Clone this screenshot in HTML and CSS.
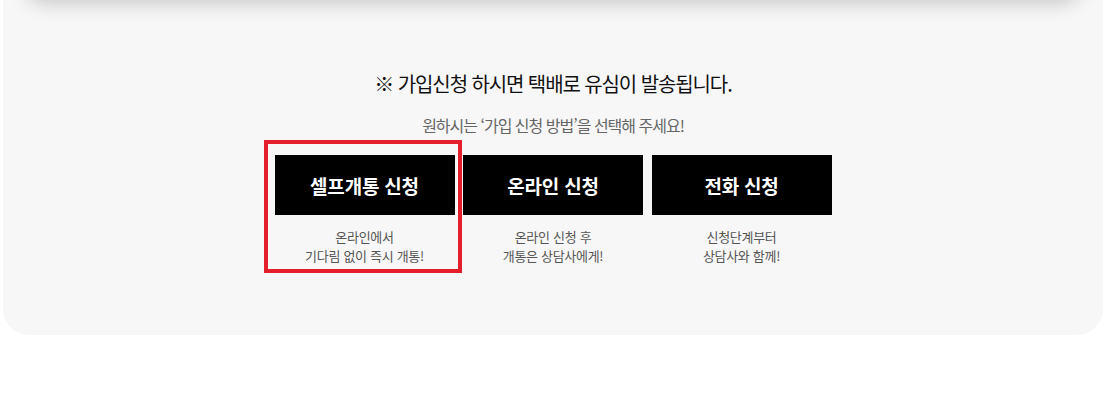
FILE: index.html
```html
<!DOCTYPE html>
<html lang="ko">
<head>
<meta charset="utf-8">
<title>가입신청</title>
<link rel="stylesheet" href="styles.css">
</head>
<body>
<section class="panel">
  <div class="card-above"></div>
  <h2 class="title">※ 가입신청 하시면 택배로 유심이 발송됩니다.</h2>
  <p class="subtitle">원하시는 ‘가입 신청 방법’을 선택해 주세요!</p>
  <div class="options">
    <div class="option is-highlighted">
      <a class="option-btn" href="#">셀프개통 신청</a>
      <p class="option-desc">온라인에서<br>기다림 없이 즉시 개통!</p>
      <span class="highlight-box"></span>
    </div>
    <div class="option">
      <a class="option-btn" href="#">온라인 신청</a>
      <p class="option-desc">온라인 신청 후<br>개통은 상담사에게!</p>
    </div>
    <div class="option">
      <a class="option-btn" href="#">전화 신청</a>
      <p class="option-desc">신청단계부터<br>상담사와 함께!</p>
    </div>
  </div>
</section>
</body>
</html>
```
FILE: styles.css
```css
* { box-sizing: border-box; }
html, body { margin: 0; padding: 0; background: #fff; }
body {
  font-family: "Noto Sans CJK KR", "Noto Sans", sans-serif;
  overflow: hidden;
}
.panel {
  position: relative;
  width: 1100px;
  margin-left: 3px;
  background: #f7f7f7;
  border-radius: 0 0 26px 26px;
  padding: 69px 0 70px;
  display: flex;
  flex-direction: column;
  align-items: center;
  overflow: hidden;
}
.card-above {
  position: absolute;
  top: -40px;
  left: 22px;
  right: 22px;
  height: 40px;
  background: #fff;
  border-radius: 24px;
  box-shadow: 0 3px 20px rgba(0, 0, 0, 0.2);
}
.title {
  margin: 0;
  font-size: 20px;
  line-height: 30px;
  font-weight: 400;
  color: #111;
  letter-spacing: -1.1px;
}
.subtitle {
  margin: 16px 0 0;
  font-size: 16px;
  line-height: 21px;
  color: #666;
  letter-spacing: -1px;
}
.options {
  margin-top: 19px;
  display: flex;
  gap: 8.5px;
}
.option {
  position: relative;
  width: 180px;
  display: flex;
  flex-direction: column;
  align-items: center;
}
.option-btn {
  display: flex;
  align-items: center;
  justify-content: center;
  width: 100%;
  height: 60px;
  background: #000;
  color: #fff;
  text-decoration: none;
  font-size: 19px;
  font-weight: 700;
  letter-spacing: -0.2px;
}
.option-desc {
  margin: 12px 0 0;
  font-size: 13px;
  line-height: 19px;
  color: #555;
  text-align: center;
  letter-spacing: -0.3px;
}
.highlight-box {
  position: absolute;
  top: -15px;
  left: -11px;
  right: -7px;
  bottom: -8px;
  border: 4px solid #e41e2b;
  pointer-events: none;
}
```
